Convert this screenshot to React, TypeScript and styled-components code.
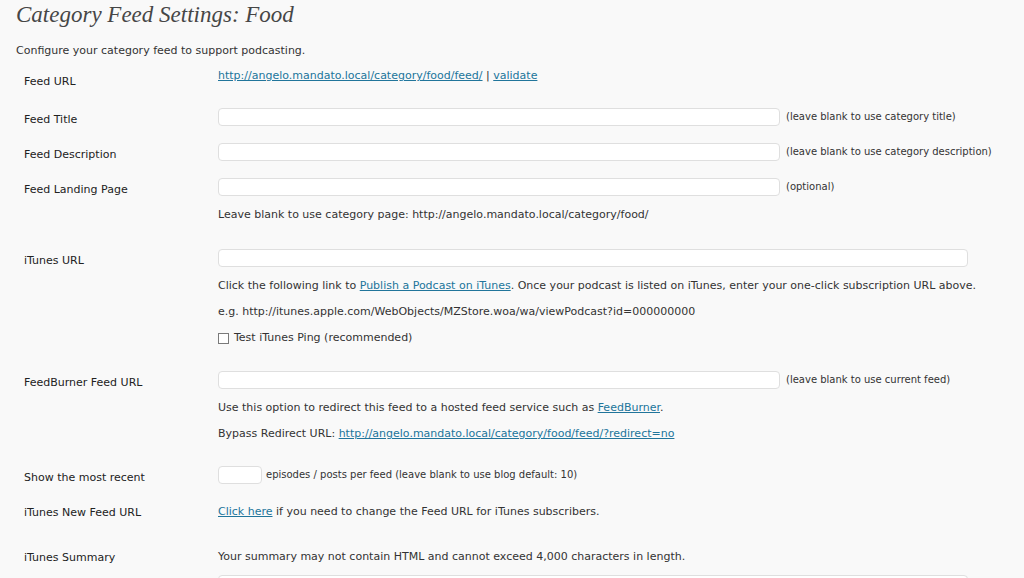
import React from 'react';
import styled, { createGlobalStyle } from 'styled-components';

const GlobalStyle = createGlobalStyle`
  html, body {
    margin: 0;
    padding: 0;
    background: #f9f9f9;
  }
  body {
    font-family: "DejaVu Sans", Verdana, sans-serif;
    font-size: 11px;
    color: #333;
  }
`;

const Page = styled.div`
  padding: 0 16px;
  height: 578px;
  overflow: hidden;
`;

const Heading = styled.h2`
  margin: 0 0 13px;
  font-family: "Liberation Serif", "DejaVu Serif", serif;
  font-style: italic;
  font-weight: normal;
  font-size: 23px;
  line-height: 30px;
  color: #464646;
`;

const Intro = styled.p`
  margin: 0;
  line-height: 16px;
`;

const Row = styled.div<{ $space: number }>`
  display: grid;
  grid-template-columns: 202px 1fr;
  align-items: start;
  padding: 8px 0 ${p => p.$space}px;
`;

const Label = styled.div<{ $offset?: number }>`
  padding: ${p => p.$offset ?? 3}px 0 0 8px;
  margin-bottom: -${p => p.$offset ?? 3}px;
  line-height: 18px;
  color: #222;
`;

const Field = styled.div`
  display: flex;
  flex-direction: column;
  align-items: flex-start;
`;

const Line = styled.div`
  display: flex;
  align-items: center;
  height: 18px;
  line-height: 18px;
  white-space: nowrap;
`;

const Input = styled.input<{ $width: number }>`
  box-sizing: border-box;
  width: ${p => p.$width}px;
  height: 18px;
  margin: 0;
  padding: 0 3px;
  border: 1px solid #dfdfdf;
  border-radius: 4px;
  background: #fff;
  font: inherit;
`;

const Hint = styled.span<{ $gap?: number }>`
  margin-left: ${p => p.$gap ?? 6}px;
  font-size: 10px;
  color: #333;
`;

const Desc = styled.div<{ $first?: boolean }>`
  margin: ${p => (p.$first ? 10 : 8)}px 0 0;
  line-height: 18px;
  white-space: nowrap;
`;

const Link = styled.a`
  color: #21759b;
  text-decoration: underline;
`;

const Check = styled.span`
  display: inline-block;
  box-sizing: border-box;
  width: 11px;
  height: 11px;
  margin-right: 5px;
  border: 1px solid #7a7a7a;
  background: #fff;
`;

const TextArea = styled.textarea`
  box-sizing: border-box;
  width: 750px;
  height: 80px;
  margin: 9px 0 0;
  border: 1px solid #dfdfdf;
  border-radius: 4px;
  background: #fff;
  resize: none;
`;

const App = () => (
  <Page>
    <GlobalStyle />
    <Heading>Category Feed Settings: Food</Heading>
    <Intro>Configure your category feed to support podcasting.</Intro>

    <Row $space={15}>
      <Label $offset={6}>Feed URL</Label>
      <Field>
        <Line>
          <Link href="#">http://angelo.mandato.local/category/food/feed/</Link>
          &nbsp;|&nbsp;
          <Link href="#">validate</Link>
        </Line>
      </Field>
    </Row>

    <Row $space={9}>
      <Label>Feed Title</Label>
      <Field>
        <Line>
          <Input $width={562} />
          <Hint>(leave blank to use category title)</Hint>
        </Line>
      </Field>
    </Row>

    <Row $space={9}>
      <Label>Feed Description</Label>
      <Field>
        <Line>
          <Input $width={562} />
          <Hint>(leave blank to use category description)</Hint>
        </Line>
      </Field>
    </Row>

    <Row $space={17}>
      <Label>Feed Landing Page</Label>
      <Field>
        <Line>
          <Input $width={562} />
          <Hint>(optional)</Hint>
        </Line>
        <Desc $first>
          Leave blank to use category page: http://angelo.mandato.local/category/food/
        </Desc>
      </Field>
    </Row>

    <Row $space={16}>
      <Label>iTunes URL</Label>
      <Field>
        <Input $width={750} />
        <Desc $first>
          Click the following link to <Link href="#">Publish a Podcast on iTunes</Link>. Once
          your podcast is listed on iTunes, enter your one-click subscription URL above.
        </Desc>
        <Desc>e.g. http://itunes.apple.com/WebObjects/MZStore.woa/wa/viewPodcast?id=000000000</Desc>
        <Desc>
          <Line>
            <Check />
            Test iTunes Ping (recommended)
          </Line>
        </Desc>
      </Field>
    </Row>

    <Row $space={15}>
      <Label>FeedBurner Feed URL</Label>
      <Field>
        <Line>
          <Input $width={562} />
          <Hint>(leave blank to use current feed)</Hint>
        </Line>
        <Desc $first>
          Use this option to redirect this feed to a hosted feed service such as{' '}
          <Link href="#">FeedBurner</Link>.
        </Desc>
        <Desc>
          Bypass Redirect URL:{' '}
          <Link href="#">http://angelo.mandato.local/category/food/feed/?redirect=no</Link>
        </Desc>
      </Field>
    </Row>

    <Row $space={11}>
      <Label>Show the most recent</Label>
      <Field>
        <Line>
          <Input $width={44} />
          <Hint $gap={4}>episodes / posts per feed (leave blank to use blog default: 10)</Hint>
        </Line>
      </Field>
    </Row>

    <Row $space={19}>
      <Label $offset={1}>iTunes New Feed URL</Label>
      <Field>
        <Line>
          <Link href="#">Click here</Link>&nbsp;if you need to change the Feed URL for iTunes
          subscribers.
        </Line>
      </Field>
    </Row>

    <Row $space={9}>
      <Label $offset={1}>iTunes Summary</Label>
      <Field>
        <Line>
          Your summary may not contain HTML and cannot exceed 4,000 characters in length.
        </Line>
        <TextArea />
      </Field>
    </Row>
  </Page>
);

export default App;
